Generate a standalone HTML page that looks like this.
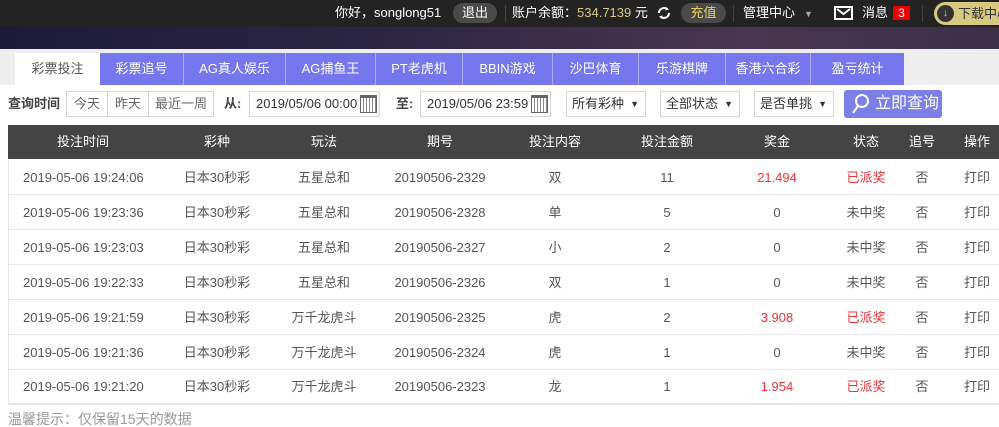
<!DOCTYPE html>
<html><head><meta charset="utf-8"><style>
*{margin:0;padding:0;box-sizing:border-box}
body{width:999px;height:426px;overflow:hidden;background:#fff;font-family:"Liberation Sans","Noto Sans CJK SC",sans-serif;font-size:12px;color:#333;position:relative;line-height:16px}
.a{position:absolute;white-space:nowrap}
#top{position:absolute;left:0;top:0;width:999px;height:27px;background:#232323}
#grad{position:absolute;left:0;top:27px;width:999px;height:22px;background:linear-gradient(90deg,#1d1a3a 0%,#2d2645 40%,#4a3650 75%,#3a3048 100%)}
#tabbar{position:absolute;left:0;top:49px;width:999px;height:36px;background:#eeeeee}
.tab{position:absolute;top:53px;height:32px;background:#7676ee;color:#fff;font-size:13px;text-align:center;line-height:32px;border-right:1px solid #a9a9f5}
.tab.on{background:#fff;color:#555;border:none}
.w{color:#fff;font-size:13px;line-height:16px}
.pill{position:absolute;top:3px;height:20px;border-radius:10px;background:#4a4a4a;color:#fff;font-size:13px;text-align:center;line-height:20px}
.box{position:absolute;top:91px;height:26px;border:1px solid #d5d5d5;background:#fff;font-size:13px;line-height:24px;color:#333}
.th{position:absolute;top:125px;height:34px;background:#444;left:8px;width:991px}
.c{position:absolute;text-align:center;white-space:nowrap;line-height:16px;height:16px}
.row{position:absolute;left:8px;width:991px;border-bottom:1px solid #e6e6e6;border-left:1px solid #e6e6e6}
</style></head><body>
<div id="top"></div><div id="grad"></div><div id="tabbar"></div>
<div class="a w" style="left:335px;top:5px">你好，songlong51</div>
<div class="pill" style="left:453px;width:44px">退出</div>
<div class="a" style="left:505px;top:5px;width:1px;height:17px;background:#444"></div>
<div class="a w" style="left:512px;top:5px">账户余额：<span style="color:#d8c882">534.7139</span> 元</div>
<svg class="a" style="left:656px;top:5px" width="16" height="16" viewBox="0 0 16 16"><path d="M3 8a5 5 0 0 1 8.5-3.5M13 8a5 5 0 0 1-8.5 3.5" stroke="#fff" stroke-width="2" fill="none"/><path d="M10 2l3 2.5-3.5 1z M6 14l-3-2.5 3.5-1z" fill="#fff"/></svg>
<div class="pill" style="left:681px;width:45px;color:#e8d36a">充值</div>
<div class="a" style="left:733px;top:5px;width:1px;height:17px;background:#444"></div>
<div class="a w" style="left:743px;top:5px">管理中心</div>
<div class="a" style="left:804px;top:6px;color:#aaa;font-size:9px">▼</div>
<div class="a" style="left:834px;top:6px;width:19px;height:14px;border:2px solid #fff"></div>
<svg class="a" style="left:836px;top:8px" width="15" height="8"><path d="M1 1l6.5 5L14 1" stroke="#fff" stroke-width="2" fill="none"/></svg>
<div class="a w" style="left:862px;top:5px">消息</div>
<div class="a" style="left:893px;top:6px;width:17px;height:14px;background:#e00;color:#fff;font-size:12px;text-align:center;line-height:14px">3</div>
<div class="a" style="left:922px;top:5px;width:1px;height:17px;background:#444"></div>
<div class="a" style="left:934px;top:2px;width:80px;height:23px;border-radius:12px;background:#d8c880;color:#333;font-size:13px;line-height:23px;padding-left:24px">下载中心</div>
<div class="a" style="left:937px;top:5px;width:17px;height:17px;border-radius:50%;background:#333;color:#d8c880;font-size:11px;text-align:center;line-height:17px">↓</div>

<div class="tab on" style="left:15px;width:85px">彩票投注</div>
<div class="tab" style="left:100px;width:84px">彩票追号</div>
<div class="tab" style="left:184px;width:102px">AG真人娱乐</div>
<div class="tab" style="left:286px;width:90px">AG捕鱼王</div>
<div class="tab" style="left:376px;width:87px">PT老虎机</div>
<div class="tab" style="left:463px;width:90px">BBIN游戏</div>
<div class="tab" style="left:553px;width:86px">沙巴体育</div>
<div class="tab" style="left:639px;width:87px">乐游棋牌</div>
<div class="tab" style="left:726px;width:85px">香港六合彩</div>
<div class="tab" style="left:811px;width:93px;border:none">盈亏统计</div>

<div class="a" style="left:8px;top:96px;font-size:13px;font-weight:bold;color:#444">查询时间</div>
<div class="box" style="left:66px;width:42px;text-align:center;color:#666">今天</div>
<div class="box" style="left:107px;width:42px;text-align:center;color:#666">昨天</div>
<div class="box" style="left:148px;width:66px;text-align:center;color:#666">最近一周</div>
<div class="a" style="left:224px;top:96px;font-size:13px;font-weight:bold;color:#444">从:</div>
<div class="box" style="left:249px;width:131px;padding-left:6px">2019/05/06 00:00</div>
<div class="a" style="left:360px;top:95px;width:17px;height:18px;border:1px solid #666;border-top:3px solid #666;background:repeating-linear-gradient(90deg,#fff 0 2px,#888 2px 3px)"></div>
<div class="a" style="left:396px;top:96px;font-size:13px;font-weight:bold;color:#444">至:</div>
<div class="box" style="left:420px;width:131px;padding-left:6px">2019/05/06 23:59</div>
<div class="a" style="left:531px;top:95px;width:17px;height:18px;border:1px solid #666;border-top:3px solid #666;background:repeating-linear-gradient(90deg,#fff 0 2px,#888 2px 3px)"></div>
<div class="box" style="left:566px;width:80px;padding-left:5px">所有彩种 <span style="position:absolute;right:6px;font-size:9px">▼</span></div>
<div class="box" style="left:660px;width:80px;padding-left:5px">全部状态 <span style="position:absolute;right:6px;font-size:9px">▼</span></div>
<div class="box" style="left:754px;width:80px;padding-left:5px">是否单挑 <span style="position:absolute;right:6px;font-size:9px">▼</span></div>
<div class="a" style="left:844px;top:90px;width:98px;height:28px;border-radius:3px;background:#7b80e8;color:#fff;font-size:16px;line-height:28px;padding-left:31px">立即查询</div>
<svg class="a" style="left:850px;top:93px" width="20" height="22"><circle cx="12" cy="8" r="6" stroke="#fff" stroke-width="2" fill="none"/><path d="M8 13l-5 7" stroke="#fff" stroke-width="2"/></svg>

<div class="th"></div>
<div id="hdr"></div>
<div class="a" style="left:8px;top:404px;width:991px;height:1px;background:#e6e6e6"></div>
<div class="a" style="left:8px;top:411px;font-size:14px;color:#999">温馨提示：仅保留15天的数据</div>
<script>
var cx=[83,217,324,440,555,667,777,866,922,977];
var h=["投注时间","彩种","玩法","期号","投注内容","投注金额","奖金","状态","追号","操作"];
var s='';
h.forEach(function(t,i){s+='<div class="c" style="left:'+(cx[i]-50)+'px;width:100px;top:134px;color:#fff;font-size:13px">'+t+'</div>';});
var d=[["19:24:06","五星总和","2329","双","11","21.494",1],["19:23:36","五星总和","2328","单","5","0",0],["19:23:03","五星总和","2327","小","2","0",0],["19:22:33","五星总和","2326","双","1","0",0],["19:21:59","万千龙虎斗","2325","虎","2","3.908",1],["19:21:36","万千龙虎斗","2324","虎","1","0",0],["19:21:20","万千龙虎斗","2323","龙","1","1.954",1]];
d.forEach(function(r,k){var y=160+k*34.9;s+='<div class="row" style="top:'+y+'px;height:35px"></div>';
var v=["2019-05-06 "+r[0],"日本30秒彩",r[1],"20190506-"+r[2],r[3],r[4],r[5],r[6]?"已派奖":"未中奖","否","打印"];
v.forEach(function(t,i){var red=(i==6||i==7)&&r[6];s+='<div class="c" style="left:'+(cx[i]-60)+'px;width:120px;top:'+(y+10)+'px;font-size:13px;color:'+(red?'#e8343a':'#555')+'">'+t+'</div>';});});
document.getElementById('hdr').innerHTML=s;
</script>
</body></html>
